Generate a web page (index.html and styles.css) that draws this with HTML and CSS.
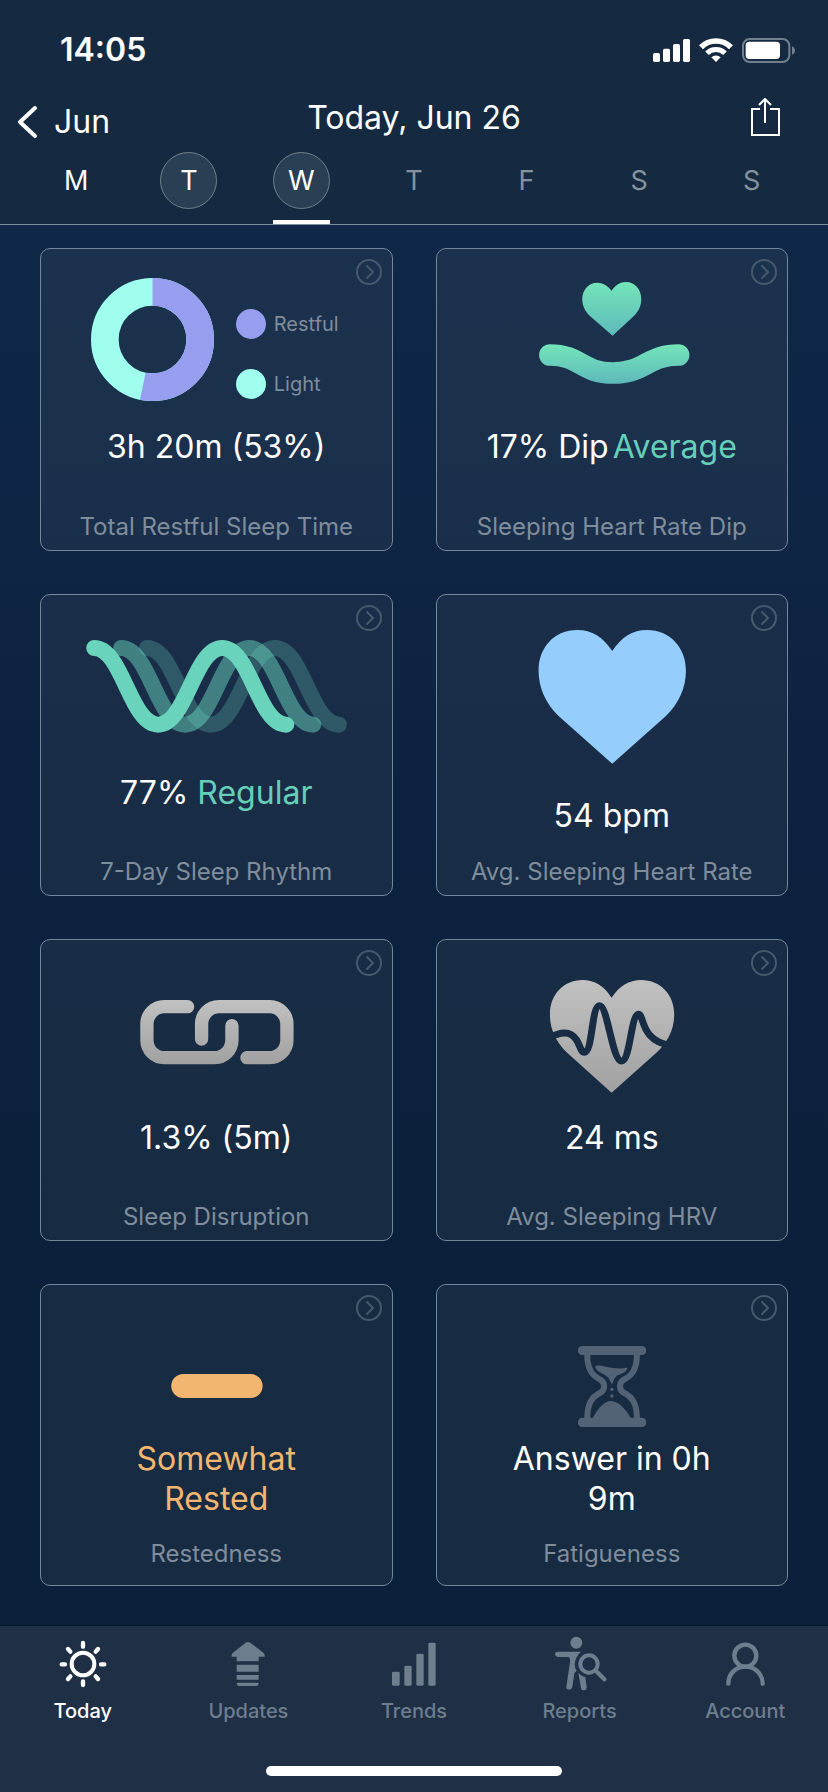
FILE: index.html
```html
<!DOCTYPE html>
<html lang="en">
  <head>
    <meta charset="UTF-8" />
    <meta name="viewport" content="width=device-width, initial-scale=1.0" />
    <title>Today, Jun 26</title>
    <link rel="stylesheet" href="styles.css">
  </head>

  <body>
    <header class="header">
      <div class="status">
        <span class="time">14:05</span>
        <div class="status-icons">
          <svg width="37" height="25" viewBox="717 111 111 75" fill="#fff">
            <rect x="717" y="156" width="21" height="27" rx="5" />
            <rect x="747" y="143" width="21" height="40" rx="5" />
            <rect x="777" y="129" width="21" height="54" rx="5" />
            <rect x="807" y="114" width="21" height="69" rx="5" />
          </svg>
          <svg width="34" height="25" viewBox="853 111 102 75" fill="none" stroke="#fff">
            <path d="M859 139a63 63 0 0 1 90 0" stroke-width="17" />
            <path d="M877 157a38 38 0 0 1 54 0" stroke-width="15" />
            <path d="M904 183l-14-14a20 20 0 0 1 28 0z" fill="#fff" stroke="none" />
          </svg>
          <svg width="53" height="25" viewBox="981 111 159 75">
            <rect x="984" y="114" width="139" height="69" rx="20" fill="none" stroke="#73808d" stroke-width="6" />
            <rect x="992" y="122" width="103" height="52" rx="11" fill="#fff" />
            <path d="M1131 136c12 4 12 21 0 25z" fill="#73808d" />
          </svg>
        </div>
      </div>

      <nav class="nav">
        <a class="back" href="#month">
          <svg width="21" height="34" viewBox="0 0 21 34" fill="none" stroke="#fff" stroke-width="4" stroke-linecap="round" stroke-linejoin="round">
            <path d="M18 3L3 17l15 14" />
          </svg>
          Jun
        </a>
        <h1 class="title">Today, Jun 26</h1>
        <button class="share" type="button" aria-label="Share">
          <svg width="30" height="40" viewBox="0 0 30 40" fill="none" stroke="#fff" stroke-width="2">
            <path d="M9 11H1v26h27V11h-9" />
            <path d="M14 25V2M8 7l6-6 6 6" />
          </svg>
        </button>
      </nav>

      <div class="days">
        <button class="day past" type="button"><span>M</span></button>
        <button class="day past ring" type="button"><span>T</span></button>
        <button class="day past ring active" type="button"><span>W</span></button>
        <button class="day" type="button"><span>T</span></button>
        <button class="day" type="button"><span>F</span></button>
        <button class="day" type="button"><span>S</span></button>
        <button class="day" type="button"><span>S</span></button>
      </div>
    </header>

    <main class="cards">
      <section class="card">
        <a class="more" href="#restful" aria-label="Total Restful Sleep Time details">
          <svg viewBox="0 0 26 26"><circle cx="13" cy="13" r="12" /><path d="M11 7l6 6-6 6" /></svg>
        </a>
        <div class="art chart">
          <svg width="123" height="123" viewBox="0 0 369 369" fill="none" stroke-width="83">
            <circle cx="184.5" cy="184.5" r="143" stroke="#a0feee" />
            <circle cx="184.5" cy="184.5" r="143" stroke="#989eef" pathLength="1000" stroke-dasharray="532 468" transform="rotate(-90 184.5 184.5)" />
          </svg>
          <ul class="legend">
            <li><i class="dot restful"></i>Restful</li>
            <li><i class="dot light"></i>Light</li>
          </ul>
        </div>
        <p class="value">3h 20m (53%)</p>
        <h2 class="label">Total Restful Sleep Time</h2>
      </section>

      <section class="card">
        <a class="more" href="#dip" aria-label="Sleeping Heart Rate Dip details">
          <svg viewBox="0 0 26 26"><circle cx="13" cy="13" r="12" /><path d="M11 7l6 6-6 6" /></svg>
        </a>
        <svg class="art" viewBox="39 57 1050 534">
          <defs>
            <linearGradient id="heartFill" x1="0" y1="0" x2="0" y2="1">
              <stop offset="0" stop-color="#74e5b9" />
              <stop offset="1" stop-color="#5eb9ba" />
            </linearGradient>
            <linearGradient id="handFill" gradientUnits="userSpaceOnUse" x1="0" y1="343" x2="0" y2="461">
              <stop offset="0" stop-color="#74e5b9" />
              <stop offset="1" stop-color="#5eb9ba" />
            </linearGradient>
          </defs>
          <path fill="url(#heartFill)" d="M562 182C550 166 535 158 519 158C493 158 474 180 474 207C474 228 483 244 497 258L565 317L628 259C643 244 651 228 651 206C651 178 631 156 605 156C588 156 573 165 562 182Z" />
          <path fill="none" stroke="url(#handFill)" stroke-width="65" stroke-linecap="round" d="M377 375C470 375 470 429 566 429C662 429 670 375 763 375" />
        </svg>
        <p class="value">17% Dip<span class="good near">Average</span></p>
        <h2 class="label">Sleeping Heart Rate Dip</h2>
      </section>

      <section class="card">
        <a class="more" href="#rhythm" aria-label="7-Day Sleep Rhythm details">
          <svg viewBox="0 0 26 26"><circle cx="13" cy="13" r="12" /><path d="M11 7l6 6-6 6" /></svg>
        </a>
        <svg class="art" viewBox="33 45 1050 534" fill="none" stroke="#6ad3bb" stroke-width="48" stroke-linecap="round">
          <path opacity=".27" d="M350 204C434 204 458 434 542 434S650 204 734 204S842 434 926 434" />
          <path opacity=".5" d="M273 204C357 204 381 434 465 434S573 204 657 204S765 434 849 434" />
          <path d="M192 204C276 204 300 434 384 434S492 204 576 204S684 434 768 434" />
        </svg>
        <p class="value">77% <span class="good">Regular</span></p>
        <h2 class="label">7-Day Sleep Rhythm</h2>
      </section>

      <section class="card">
        <a class="more" href="#heart-rate" aria-label="Avg. Sleeping Heart Rate details">
          <svg viewBox="0 0 26 26"><circle cx="13" cy="13" r="12" /><path d="M11 7l6 6-6 6" /></svg>
        </a>
        <svg class="art tall" viewBox="39 45 1050 603">
          <path fill="#95cefd" d="M564 213C537 172 503 150 459 150C390 150 343 203 343 272C343 325 365 370 403 408L564 551L725 408C763 370 785 325 785 272C785 203 737 150 668 150C625 150 591 172 564 213Z" />
        </svg>
        <p class="value">54 bpm</p>
        <h2 class="label">Avg. Sleeping Heart Rate</h2>
      </section>

      <section class="card">
        <a class="more" href="#disruption" aria-label="Sleep Disruption details">
          <svg viewBox="0 0 26 26"><circle cx="13" cy="13" r="12" /><path d="M11 7l6 6-6 6" /></svg>
        </a>
        <svg class="art" viewBox="33 45 1050 534">
          <defs>
            <linearGradient id="chainFill" gradientUnits="userSpaceOnUse" x1="0" y1="225" x2="0" y2="418">
              <stop offset="0" stop-color="#c1c1c1" />
              <stop offset="1" stop-color="#a1a1a1" />
            </linearGradient>
          </defs>
          <g fill="none" stroke="url(#chainFill)" stroke-width="40" stroke-linecap="round">
            <path d="M472 245H402A52 52 0 0 0 350 297V346A52 52 0 0 0 402 398H553A52 52 0 0 0 605 346V302" />
            <path d="M514 342V297A52 52 0 0 1 566 245H718A52 52 0 0 1 770 297V346A52 52 0 0 1 718 398H650" />
          </g>
        </svg>
        <p class="value">1.3% (5m)</p>
        <h2 class="label">Sleep Disruption</h2>
      </section>

      <section class="card">
        <a class="more" href="#hrv" aria-label="Avg. Sleeping HRV details">
          <svg viewBox="0 0 26 26"><circle cx="13" cy="13" r="12" /><path d="M11 7l6 6-6 6" /></svg>
        </a>
        <svg class="art" viewBox="39 45 1050 534">
          <defs>
            <linearGradient id="hrvFill" x1="0" y1="0" x2="0" y2="1">
              <stop offset="0" stop-color="#c1c1c1" />
              <stop offset="1" stop-color="#a1a1a1" />
            </linearGradient>
            <mask id="pulse" maskUnits="userSpaceOnUse" x="360" y="150" width="410" height="370">
              <rect x="360" y="150" width="410" height="370" fill="#fff" />
              <path fill="none" stroke="#000" stroke-width="21" d="M370 340C410 320 438 316 457 345C468 362 470 382 480 382C506 382 501 242 526 242C550 242 564 408 592 408C618 408 620 268 643 268C660 268 648 350 740 361" />
            </mask>
          </defs>
          <path fill="url(#hrvFill)" mask="url(#pulse)" d="M562 218C540 184 511 165 475 165C417 165 377 210 377 268C377 313 395 350 427 382L562 503L698 382C731 350 750 313 750 268C750 210 709 165 651 165C614 165 585 184 562 218Z" />
        </svg>
        <p class="value">24 ms</p>
        <h2 class="label">Avg. Sleeping HRV</h2>
      </section>

      <section class="card question">
        <a class="more" href="#restedness" aria-label="Restedness details">
          <svg viewBox="0 0 26 26"><circle cx="13" cy="13" r="12" /><path d="M11 7l6 6-6 6" /></svg>
        </a>
        <svg class="art" viewBox="33 45 1050 462">
          <rect x="423" y="312" width="274" height="72" rx="36" fill="#f3b670" />
        </svg>
        <p class="value fair">Somewhat Rested</p>
        <h2 class="label">Restedness</h2>
      </section>

      <section class="card question">
        <a class="more" href="#fatigueness" aria-label="Fatigueness details">
          <svg viewBox="0 0 26 26"><circle cx="13" cy="13" r="12" /><path d="M11 7l6 6-6 6" /></svg>
        </a>
        <svg class="art" viewBox="39 45 1050 462" fill="#536275">
          <rect x="461" y="228" width="205" height="27" rx="13" />
          <rect x="461" y="443" width="205" height="28" rx="13" />
          <g fill="none" stroke="#536275" stroke-width="18">
            <path d="M489 252C489 298 503 316 527 328C544 337 544 360 527 369C503 381 489 400 489 446" />
            <path d="M638 252C638 298 624 316 600 328C583 337 583 360 600 369C624 381 638 400 638 446" />
          </g>
          <path d="M513 290C513 285 530 286 545 290C570 295 590 297 606 293C611 293 610 298 605 303C598 310 590 311 582 315C570 321 569 332 563 343C557 332 554 321 541 314C525 306 515 300 513 290Z" />
          <circle cx="563" cy="358" r="5" />
          <circle cx="563" cy="378" r="5" />
          <path d="M505 445C520 416 540 393 560 393C583 393 605 418 620 445Z" />
        </svg>
        <p class="value">Answer in 0h 9m</p>
        <h2 class="label">Fatigueness</h2>
      </section>
    </main>

    <footer class="footer">
      <nav class="tabs">
        <a class="tab active" href="#today">
          <svg viewBox="163 106 168 168">
            <circle cx="247" cy="193" r="34" fill="none" stroke="currentColor" stroke-width="12" />
            <g fill="none" stroke="currentColor" stroke-width="13" stroke-linecap="round">
              <path d="M247 130v11M247 245v11M183 194h10M301 194h10" />
              <path d="M202 148l7 8M292 148l-7 8M202 238l7-8M292 238l-7-8" />
            </g>
          </svg>
          Today
        </a>
        <a class="tab" href="#updates">
          <svg viewBox="661 106 168 168" fill="currentColor">
            <path d="M738 129q7-4 14 0l40 31q4 4 3 11h-18v14h-66v-14h-15q-1-7 3-11z" />
            <path d="M711 195h66v21h-66zM711 226h66v14h-66zM711 249h66q0 10-9 10h-48q-9 0-9-10z" />
          </svg>
          Updates
        </a>
        <a class="tab" href="#trends">
          <svg viewBox="1156 106 168 168" fill="currentColor">
            <rect x="1174" y="216" width="23" height="42" rx="4" />
            <rect x="1211" y="198" width="22" height="60" rx="4" />
            <rect x="1247" y="162" width="22" height="96" rx="4" />
            <rect x="1283" y="129" width="22" height="129" rx="4" />
          </svg>
          Trends
        </a>
        <a class="tab" href="#reports">
          <svg viewBox="410 106 168 168" fill="currentColor">
            <circle cx="483" cy="129" r="18" />
            <path d="M427 156H497Q480 170 478 194Q478 205 484 213L477 221L471 262Q469 270 461 270Q452 269 453 261L464 188Q466 172 457 172H427Q419 171 419 164Q419 156 427 156Z" />
            <path d="M489 220Q498 230 510 232L514 263Q514 272 506 272Q498 272 497 264Z" />
            <circle cx="521" cy="193" r="26" fill="none" stroke="currentColor" stroke-width="12" />
            <path d="M543 215L567 239" stroke="currentColor" stroke-width="13" stroke-linecap="round" />
          </svg>
          Reports
        </a>
        <a class="tab" href="#account">
          <svg viewBox="909 106 168 168" fill="none" stroke="currentColor" stroke-width="13" stroke-linecap="round">
            <circle cx="994" cy="168" r="33" />
            <path d="M943 252C943 222 966 201 994 201S1046 222 1046 252" />
          </svg>
          Account
        </a>
      </nav>
      <div class="home-bar"></div>
    </footer>
  </body>
</html>
```
FILE: styles.css
```css
* {
  box-sizing: border-box;
}

body {
  margin: 0;
  min-height: 100vh;
  display: flex;
  flex-direction: column;
  font-family: Inter, "Liberation Sans", sans-serif;
  color: #fff;
  background: #0b203b;
}

a {
  color: inherit;
  text-decoration: none;
}

button {
  padding: 0;
  border: none;
  background: none;
  font: inherit;
  color: inherit;
  cursor: pointer;
}

h1,
h2,
p,
ul {
  margin: 0;
  padding: 0;
  font-weight: 400;
}

svg {
  display: block;
}

/* header */
.header {
  padding-top: 31px;
  background: #152a41;
  border-bottom: 1px solid #7f909b;
}

.status {
  display: flex;
  justify-content: space-between;
  align-items: center;
  padding: 0 33px 0 60px;
}

.time {
  font-size: 32px;
  line-height: 38px;
  font-weight: 600;
}

.status-icons {
  display: flex;
  gap: 9px;
}

.nav {
  display: grid;
  grid-template-columns: 1fr auto 1fr;
  height: 44px;
  margin-top: 29px;
  padding: 0 17px;
  font-size: 32px;
  line-height: 40px;
}

.back {
  display: flex;
  align-items: center;
  align-self: end;
  gap: 16px;
}

.title {
  font-size: 32px;
}

.share {
  justify-self: end;
  align-self: start;
  margin-right: 30px;
}

.days {
  display: grid;
  grid-template-columns: repeat(7, 1fr);
  justify-items: center;
  margin-top: 10px;
  padding: 0 20px;
}

.day {
  padding-bottom: 11px;
  border-bottom: 4px solid transparent;
  font-size: 27px;
  color: #85939f;
}

.day span {
  display: grid;
  place-items: center;
  width: 57px;
  height: 57px;
  border: 1px solid transparent;
  border-radius: 50%;
}

.day.past {
  color: #fff;
}

.day.ring span {
  background: #2b3f54;
  border-color: #6f7f8d;
}

.day.active {
  border-bottom-color: #fff;
}

/* cards */
.cards {
  flex: 1;
  display: grid;
  grid-template-columns: 1fr 1fr;
  grid-template-rows: 303px;
  grid-auto-rows: 302px;
  gap: 43px;
  padding: 23px 40px 39px;
  background: linear-gradient(#0f2848, #0d2240 40%, #0b203b 70%);
}

.card {
  position: relative;
  display: flex;
  flex-direction: column;
  align-items: center;
  padding-bottom: 9px;
  border: 1px solid #74879a;
  border-radius: 10px;
  background: rgba(215, 218, 190, 0.06);
  text-align: center;
}

.more {
  position: absolute;
  top: 10px;
  right: 10px;
  width: 26px;
}

.more svg {
  fill: none;
  stroke: #465a6e;
  stroke-width: 2;
  stroke-linecap: round;
}

.art {
  width: 100%;
  height: 178px;
  flex-shrink: 0;
}

.art.tall {
  height: 201px;
}

.chart {
  display: flex;
  justify-content: center;
  align-items: flex-start;
  gap: 22px;
  padding-top: 29px;
  padding-right: 3px;
}

.legend {
  display: grid;
  gap: 30px;
  padding-top: 31px;
  list-style: none;
  font-size: 20px;
  color: #7f8d9d;
}

.legend li {
  display: flex;
  align-items: center;
  gap: 8px;
}

.dot {
  width: 30px;
  height: 30px;
  border-radius: 50%;
}

.dot.restful {
  background: #989eef;
}

.dot.light {
  background: #a0feee;
}

.value {
  font-size: 32px;
  line-height: 40px;
}

.good {
  color: #67cfb9;
}

.near {
  margin-left: 4px;
}

.fair {
  color: #f3b670;
}

.label {
  margin-top: auto;
  font-size: 24px;
  line-height: 28px;
  color: #7f8d9d;
}

.question {
  padding-bottom: 17px;
}

.question .art {
  height: 154px;
}

.question .value {
  max-width: 240px;
}

/* tab bar */
.footer {
  padding: 9px 0 16px;
  border-top: 1px solid #08192f;
  background: #1e2f46;
}

.tabs {
  display: grid;
  grid-template-columns: repeat(5, 1fr);
}

.tab {
  display: flex;
  flex-direction: column;
  align-items: center;
  gap: 8px;
  font-size: 20px;
  line-height: 24px;
  font-weight: 500;
  color: #6e7e8e;
}

.tab svg {
  width: 56px;
  height: 56px;
}

.tab.active {
  color: #fff;
}

.home-bar {
  width: 296px;
  max-width: 60%;
  height: 10px;
  margin: 43px auto 0;
  border-radius: 5px;
  background: #fff;
}
```
